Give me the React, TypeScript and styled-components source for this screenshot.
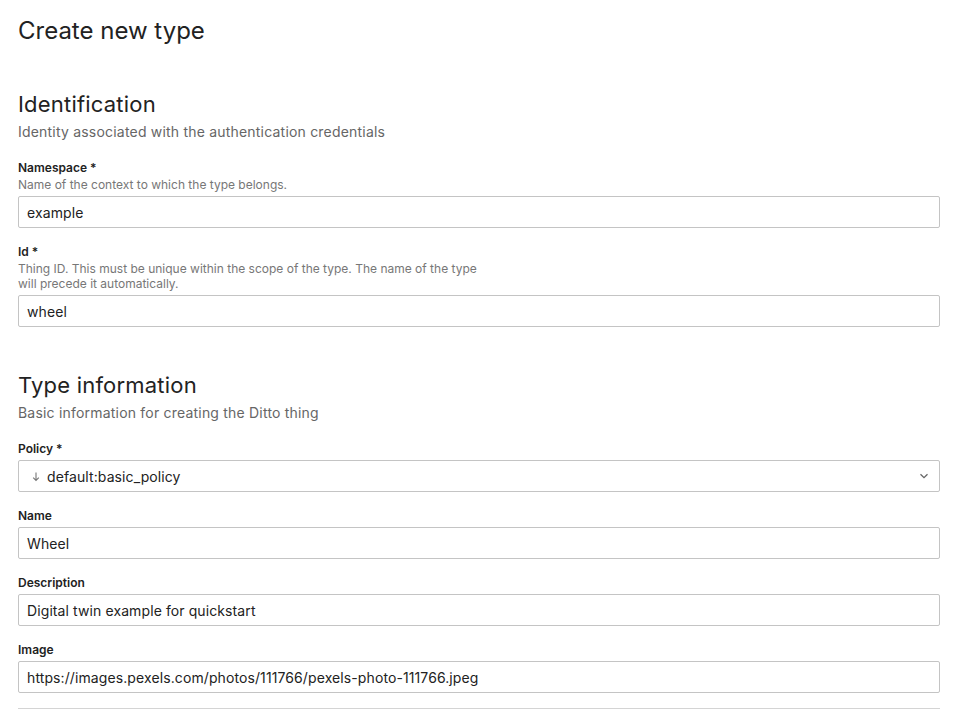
import React from "react";
import styled, { createGlobalStyle } from "styled-components";

const Global = createGlobalStyle`
  html, body { margin: 0; padding: 0; background: #fff; }
  body { font-family: Inter, "Noto Sans", sans-serif; color: #222; }
  * { box-sizing: border-box; }
`;

const Page = styled.div`
  padding: 15px 16px 0 18px;
  display: flex;
  flex-direction: column;
`;

const Title = styled.h1`
  margin: 0;
  font-size: 24px;
  line-height: 32px;
  font-weight: 400;
  color: #222;
`;

const Section = styled.section<{ $top: number }>`
  display: flex;
  flex-direction: column;
  margin-top: ${(p) => p.$top}px;
`;

const SectionTitle = styled.h2`
  margin: 0;
  font-size: 22px;
  line-height: 28px;
  font-weight: 400;
  letter-spacing: 0.2px;
  color: #222;
`;

const SectionSub = styled.p`
  margin: 4px 0 18px;
  font-size: 14px;
  line-height: 20px;
  letter-spacing: 0.2px;
  color: #666;
`;

const Field = styled.div`
  display: flex;
  flex-direction: column;
  & + & { margin-top: 16px; }
`;

const Label = styled.label`
  font-size: 12px;
  line-height: 15px;
  font-weight: 600;
  color: #222;
  margin-bottom: 4px;
`;

const Help = styled.div`
  font-size: 12px;
  line-height: 15px;
  color: #777;
  max-width: 480px;
  margin-top: -2px;
  margin-bottom: 4px;
`;

const Input = styled.div`
  height: 32px;
  border: 1px solid #c4c4c4;
  border-radius: 2px;
  display: flex;
  align-items: center;
  padding: 0 8px;
  font-size: 14px;
  letter-spacing: 0.1px;
  color: #222;
`;

const SelectBox = styled(Input)`
  justify-content: space-between;
  padding: 0 10px 0 12px;
`;

const SelectValue = styled.span`
  display: flex;
  align-items: center;
  gap: 6px;
`;

const Divider = styled.hr`
  margin: 15px 0 0;
  border: none;
  border-top: 1px solid #d4d4d4;
`;

const fieldsA = [
  { label: "Namespace *", help: "Name of the context to which the type belongs.", value: "example" },
  {
    label: "Id *",
    help: "Thing ID. This must be unique within the scope of the type. The name of the type will precede it automatically.",
    value: "wheel",
  },
];

const fieldsB = [
  { label: "Name", value: "Wheel" },
  { label: "Description", value: "Digital twin example for quickstart" },
  { label: "Image", value: "https://images.pexels.com/photos/111766/pexels-photo-111766.jpeg" },
];

export default function App() {
  return (
    <>
      <Global />
      <Page>
        <Title>Create new type</Title>
        <Section $top={43}>
          <SectionTitle>Identification</SectionTitle>
          <SectionSub>Identity associated with the authentication credentials</SectionSub>
          {fieldsA.map((f) => (
            <Field key={f.label}>
              <Label>{f.label}</Label>
              <Help>{f.help}</Help>
              <Input>{f.value}</Input>
            </Field>
          ))}
        </Section>
        <Section $top={44}>
          <SectionTitle>Type information</SectionTitle>
          <SectionSub>Basic information for creating the Ditto thing</SectionSub>
          <Field>
            <Label>Policy *</Label>
            <SelectBox>
              <SelectValue>
                <svg width="10" height="12" viewBox="0 0 10 12" fill="none" stroke="#777" strokeWidth="1.1">
                  <path d="M5 2.5v8M2.2 7.7L5 10.5l2.8-2.8" />
                </svg>
                default:basic_policy
              </SelectValue>
              <svg width="10" height="6" viewBox="0 0 10 6" fill="none" stroke="#666" strokeWidth="1.3">
                <path d="M1.5 1.2L5 4.6l3.5-3.4" />
              </svg>
            </SelectBox>
          </Field>
          {fieldsB.map((f) => (
            <Field key={f.label}>
              <Label>{f.label}</Label>
              <Input>{f.value}</Input>
            </Field>
          ))}
        </Section>
        <Divider />
      </Page>
    </>
  );
}
